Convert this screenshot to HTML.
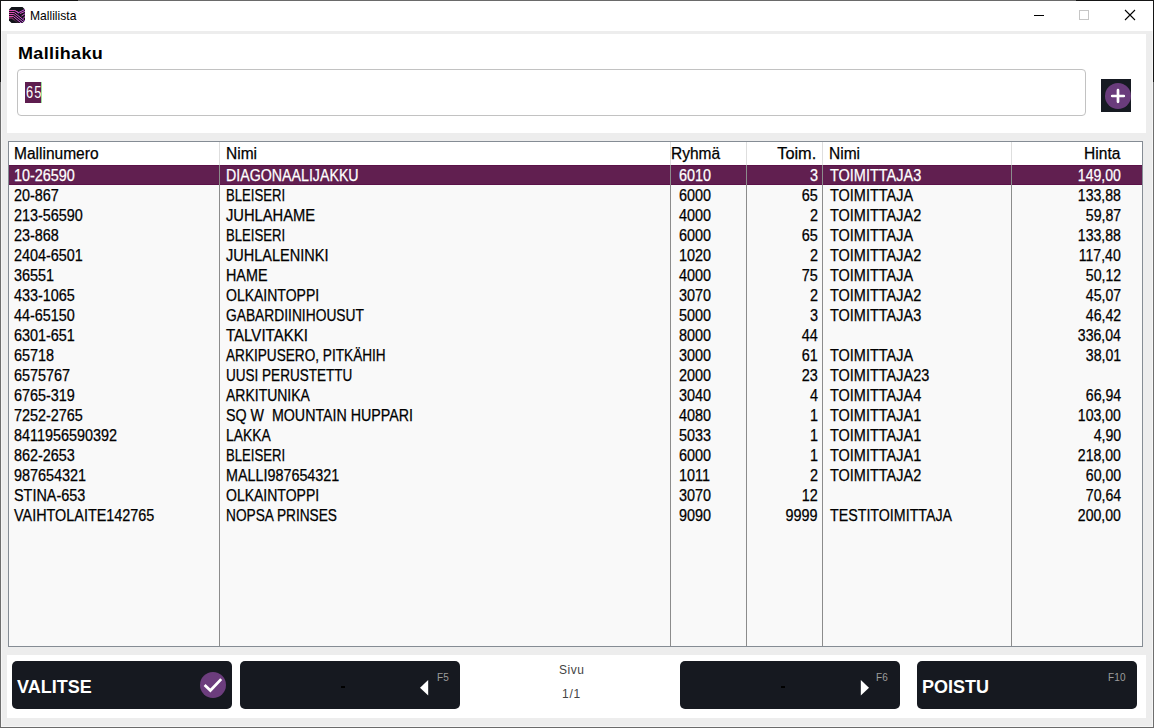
<!DOCTYPE html>
<html><head><meta charset="utf-8">
<style>
*{box-sizing:border-box;margin:0;padding:0}
html,body{width:1154px;height:728px;overflow:hidden;background:#fff}
body{position:relative;font-family:"Liberation Sans",sans-serif;color:#000}
.a{position:absolute}
.bL{left:0;top:0;width:1px;height:728px;background:#6e6e6e}
.bLt{left:0;top:0;width:1px;height:82px;background:#141414}
.bT{left:0;top:0;width:1154px;height:1px;background:#6a6a6a}
.bR{left:1153px;top:0;width:1px;height:728px;background:#6e6e6e}
.bB{left:0;top:727px;width:1154px;height:1px;background:#6a6a6a}
.gray{left:2px;top:31px;width:1150px;height:695px;background:#ededed}
.panel{background:#fff}
.title{left:30px;top:8px;font-size:13px;line-height:16px;color:#000;transform:scaleX(0.93);transform-origin:0 0}
.h1{left:18px;top:42px;font-size:18px;line-height:22px;font-weight:bold;letter-spacing:0.35px;transform:scaleY(0.96);transform-origin:0 100%}
.inp{left:17px;top:69px;width:1069px;height:47px;border:1px solid #c2c2c2;border-radius:4px;background:#fff}
.sel{left:25px;top:82px;width:16px;height:21px;background:#5e1d4f}
.seltxt{left:26px;top:82px;font-size:16px;line-height:21px;color:#fff;letter-spacing:1.3px;transform:scaleX(0.8);transform-origin:0 0}
.caret{left:41px;top:82px;width:1px;height:21px;background:#9ee09e}
.plus{left:1101px;top:79px;width:30px;height:33px;background:#161a22}
.tbl{left:8px;top:141px;width:1135px;height:506px;border:1px solid #858c94;background:#f9f9f9}
.hdr{left:9px;top:142px;width:1133px;height:23px;background:#fff}
.vs{width:1px;background:#8c8c8c}
.vsh{width:1px;background:#dedede}
.selrow{left:9px;top:165px;width:1133px;height:20px;background:#611f50;border-top:1px solid #5a1248;border-bottom:1px solid #5a1248}
.t{position:absolute;font-size:16px;line-height:20px;white-space:pre;transform:scaleX(0.9);transform-origin:0 0;-webkit-text-stroke:0.25px currentColor}
.r{transform-origin:100% 0;text-align:right}
.h{transform:scaleX(0.97)}
.w{color:#fff}
.btn{top:661px;width:220px;height:48px;background:#161920;border-radius:5px}
.bt{font-weight:bold;font-size:18px;line-height:20px;color:#fff}
.fk{font-size:10px;line-height:12px;color:#9c9c9c;letter-spacing:0.2px}
.pg{font-size:12px;line-height:14px;color:#444}
</style></head><body>
<div class="a gray"></div>
<div class="a panel" style="left:7px;top:34px;width:1139px;height:99px"></div>
<div class="a panel" style="left:7px;top:655px;width:1139px;height:63px"></div>
<div class="a" style="left:1px;top:1px;width:1152px;height:30px;background:#fff"></div>
<div class="a bT"></div><div class="a" style="left:0;top:0;width:78px;height:1px;background:#151515"></div><div class="a" style="left:1076px;top:0;width:78px;height:1px;background:#151515"></div>
<div class="a bL"></div><div class="a bLt"></div><div class="a bR"></div><div class="a" style="left:1153px;top:0;width:1px;height:82px;background:#151515"></div><div class="a bB"></div>
<div class="a" style="left:1px;top:31px;width:1px;height:696px;background:#f6f6f6"></div><div class="a" style="left:1152px;top:31px;width:1px;height:696px;background:#f6f6f6"></div><div class="a" style="left:1px;top:726px;width:1152px;height:1px;background:#f6f6f6"></div>

<!-- title bar -->
<svg class="a" style="left:9px;top:7px" width="16" height="16" viewBox="0 0 16 16">
<defs><clipPath id="ic"><path d="M2.5 0 H13.5 L16 2.5 V13.5 L13.5 16 H2.5 L0 13.5 V2.5 Z"/></clipPath>
<linearGradient id="ig" x1="0" y1="0" x2="1" y2="0.3"><stop offset="0" stop-color="#e04aa8"/><stop offset="1" stop-color="#cf5ae8"/></linearGradient>
<linearGradient id="ig2" x1="0" y1="0" x2="1" y2="0"><stop offset="0" stop-color="#e04aa8"/><stop offset="0.6" stop-color="#e04aa8" stop-opacity="0.2"/></linearGradient></defs>
<g clip-path="url(#ic)">
<rect width="16" height="16" fill="#111319"/>
<g stroke="url(#ig)" stroke-width="1" fill="none">
<path d="M0 3.5 H5.8 L9.6 5.6 L16 2.4"/>
<path d="M0 5.5 H5.3 L16 14.2"/>
<path d="M0 7.5 H4.8 L16 16.6"/>
<path d="M0 9.5 H4.3 L14 17.5"/>
<path d="M6.5 3.8 L10 6.2"/>
<path d="M11 6.5 L16 4.4"/>
<path d="M12.5 9 L16 6.8"/>
<path d="M14 11.5 L16 9.6"/>

</g>
<path d="M0 11 H3 L11 17.5" stroke="url(#ig2)" stroke-width="1.2" fill="none"/>
</g>
</svg>
<div class="a title">Mallilista</div>
<div class="a" style="left:1034px;top:15px;width:10px;height:1px;background:#000"></div>
<div class="a" style="left:1079px;top:10px;width:10px;height:10px;border:1px solid #c6c6c6"></div>
<svg class="a" style="left:1124px;top:9px" width="12" height="12" viewBox="0 0 12 12"><path d="M1 1 L11 11 M11 1 L1 11" stroke="#000" stroke-width="1.1"/></svg>

<!-- search -->
<div class="a h1">Mallihaku</div>
<div class="a inp"></div>
<div class="a sel"></div>
<div class="a seltxt">65</div>
<div class="a caret"></div>
<div class="a plus"></div>
<svg class="a" style="left:1101px;top:79px" width="30" height="33" viewBox="0 0 30 33">
<circle cx="17" cy="17" r="13" fill="#6a3c7c"/>
<path d="M11.2 17 H22.8 M17 11.2 V22.8" stroke="#fff" stroke-width="2.7" stroke-linecap="round"/>
</svg>

<!-- table -->
<div class="a tbl"></div>
<div class="a hdr"></div>
<div class="a selrow"></div>
<!--TABLE-->
<div class="a vsh" style="left:219px;top:142px;height:23px"></div>
<div class="a vs" style="left:219px;top:165px;height:481px"></div>
<div class="a vsh" style="left:670px;top:142px;height:23px"></div>
<div class="a vs" style="left:670px;top:165px;height:481px"></div>
<div class="a vsh" style="left:746px;top:142px;height:23px"></div>
<div class="a vs" style="left:746px;top:165px;height:481px"></div>
<div class="a vsh" style="left:822px;top:142px;height:23px"></div>
<div class="a vs" style="left:822px;top:165px;height:481px"></div>
<div class="a vsh" style="left:1011px;top:142px;height:23px"></div>
<div class="a vs" style="left:1011px;top:165px;height:481px"></div>
<div class="t h" style="left:14px;top:144px">Mallinumero</div>
<div class="t h" style="left:226px;top:144px">Nimi</div>
<div class="t h" style="left:671px;top:144px">Ryhmä</div>
<div class="t r h" style="right:338px;top:144px;transform:scaleX(1.0200)">Toim.</div>
<div class="t h" style="left:829px;top:144px">Nimi</div>
<div class="t r h" style="right:34px;top:144px">Hinta</div>
<div class="t w" style="left:14px;top:166px">10-26590</div>
<div class="t w" style="left:226px;top:166px;transform:scaleX(0.8878)">DIAGONAALIJAKKU</div>
<div class="t w" style="left:679px;top:166px">6010</div>
<div class="t r w" style="right:336px;top:166px">3</div>
<div class="t w" style="left:830px;top:166px;transform:scaleX(0.9050)">TOIMITTAJA3</div>
<div class="t r w" style="right:33px;top:166px;transform:scaleX(0.8800)">149,00</div>
<div class="t " style="left:14px;top:186px">20-867</div>
<div class="t " style="left:226px;top:186px;transform:scaleX(0.8214)">BLEISERI</div>
<div class="t " style="left:679px;top:186px">6000</div>
<div class="t r " style="right:336px;top:186px">65</div>
<div class="t " style="left:830px;top:186px;transform:scaleX(0.9050)">TOIMITTAJA</div>
<div class="t r " style="right:33px;top:186px;transform:scaleX(0.8800)">133,88</div>
<div class="t " style="left:14px;top:206px">213-56590</div>
<div class="t " style="left:226px;top:206px;transform:scaleX(0.9199)">JUHLAHAME</div>
<div class="t " style="left:679px;top:206px">4000</div>
<div class="t r " style="right:336px;top:206px">2</div>
<div class="t " style="left:830px;top:206px;transform:scaleX(0.9050)">TOIMITTAJA2</div>
<div class="t r " style="right:33px;top:206px;transform:scaleX(0.8800)">59,87</div>
<div class="t " style="left:14px;top:226px">23-868</div>
<div class="t " style="left:226px;top:226px;transform:scaleX(0.8214)">BLEISERI</div>
<div class="t " style="left:679px;top:226px">6000</div>
<div class="t r " style="right:336px;top:226px">65</div>
<div class="t " style="left:830px;top:226px;transform:scaleX(0.9050)">TOIMITTAJA</div>
<div class="t r " style="right:33px;top:226px;transform:scaleX(0.8800)">133,88</div>
<div class="t " style="left:14px;top:246px">2404-6501</div>
<div class="t " style="left:226px;top:246px;transform:scaleX(0.9072)">JUHLALENINKI</div>
<div class="t " style="left:679px;top:246px">1020</div>
<div class="t r " style="right:336px;top:246px">2</div>
<div class="t " style="left:830px;top:246px;transform:scaleX(0.9050)">TOIMITTAJA2</div>
<div class="t r " style="right:33px;top:246px;transform:scaleX(0.8800)">117,40</div>
<div class="t " style="left:14px;top:266px">36551</div>
<div class="t " style="left:226px;top:266px;transform:scaleX(0.8978)">HAME</div>
<div class="t " style="left:679px;top:266px">4000</div>
<div class="t r " style="right:336px;top:266px">75</div>
<div class="t " style="left:830px;top:266px;transform:scaleX(0.9050)">TOIMITTAJA</div>
<div class="t r " style="right:33px;top:266px;transform:scaleX(0.8800)">50,12</div>
<div class="t " style="left:14px;top:286px">433-1065</div>
<div class="t " style="left:226px;top:286px;transform:scaleX(0.8751)">OLKAINTOPPI</div>
<div class="t " style="left:679px;top:286px">3070</div>
<div class="t r " style="right:336px;top:286px">2</div>
<div class="t " style="left:830px;top:286px;transform:scaleX(0.9050)">TOIMITTAJA2</div>
<div class="t r " style="right:33px;top:286px;transform:scaleX(0.8800)">45,07</div>
<div class="t " style="left:14px;top:306px">44-65150</div>
<div class="t " style="left:226px;top:306px;transform:scaleX(0.8619)">GABARDIINIHOUSUT</div>
<div class="t " style="left:679px;top:306px">5000</div>
<div class="t r " style="right:336px;top:306px">3</div>
<div class="t " style="left:830px;top:306px;transform:scaleX(0.9050)">TOIMITTAJA3</div>
<div class="t r " style="right:33px;top:306px;transform:scaleX(0.8800)">46,42</div>
<div class="t " style="left:14px;top:326px">6301-651</div>
<div class="t " style="left:226px;top:326px;transform:scaleX(0.9409)">TALVITAKKI</div>
<div class="t " style="left:679px;top:326px">8000</div>
<div class="t r " style="right:336px;top:326px">44</div>
<div class="t r " style="right:33px;top:326px;transform:scaleX(0.8800)">336,04</div>
<div class="t " style="left:14px;top:346px">65718</div>
<div class="t " style="left:226px;top:346px;transform:scaleX(0.8512)">ARKIPUSERO, PITKÄHIH</div>
<div class="t " style="left:679px;top:346px">3000</div>
<div class="t r " style="right:336px;top:346px">61</div>
<div class="t " style="left:830px;top:346px;transform:scaleX(0.9050)">TOIMITTAJA</div>
<div class="t r " style="right:33px;top:346px;transform:scaleX(0.8800)">38,01</div>
<div class="t " style="left:14px;top:366px">6575767</div>
<div class="t " style="left:226px;top:366px;transform:scaleX(0.8459)">UUSI PERUSTETTU</div>
<div class="t " style="left:679px;top:366px">2000</div>
<div class="t r " style="right:336px;top:366px">23</div>
<div class="t " style="left:830px;top:366px;transform:scaleX(0.9050)">TOIMITTAJA23</div>
<div class="t " style="left:14px;top:386px">6765-319</div>
<div class="t " style="left:226px;top:386px;transform:scaleX(0.8738)">ARKITUNIKA</div>
<div class="t " style="left:679px;top:386px">3040</div>
<div class="t r " style="right:336px;top:386px">4</div>
<div class="t " style="left:830px;top:386px;transform:scaleX(0.9050)">TOIMITTAJA4</div>
<div class="t r " style="right:33px;top:386px;transform:scaleX(0.8800)">66,94</div>
<div class="t " style="left:14px;top:406px">7252-2765</div>
<div class="t " style="left:226px;top:406px;transform:scaleX(0.8904)">SQ W  MOUNTAIN HUPPARI</div>
<div class="t " style="left:679px;top:406px">4080</div>
<div class="t r " style="right:336px;top:406px">1</div>
<div class="t " style="left:830px;top:406px;transform:scaleX(0.9050)">TOIMITTAJA1</div>
<div class="t r " style="right:33px;top:406px;transform:scaleX(0.8800)">103,00</div>
<div class="t " style="left:14px;top:426px">8411956590392</div>
<div class="t " style="left:226px;top:426px;transform:scaleX(0.8687)">LAKKA</div>
<div class="t " style="left:679px;top:426px">5033</div>
<div class="t r " style="right:336px;top:426px">1</div>
<div class="t " style="left:830px;top:426px;transform:scaleX(0.9050)">TOIMITTAJA1</div>
<div class="t r " style="right:33px;top:426px;transform:scaleX(0.8800)">4,90</div>
<div class="t " style="left:14px;top:446px">862-2653</div>
<div class="t " style="left:226px;top:446px;transform:scaleX(0.8214)">BLEISERI</div>
<div class="t " style="left:679px;top:446px">6000</div>
<div class="t r " style="right:336px;top:446px">1</div>
<div class="t " style="left:830px;top:446px;transform:scaleX(0.9050)">TOIMITTAJA1</div>
<div class="t r " style="right:33px;top:446px;transform:scaleX(0.8800)">218,00</div>
<div class="t " style="left:14px;top:466px">987654321</div>
<div class="t " style="left:226px;top:466px;transform:scaleX(0.8968)">MALLI987654321</div>
<div class="t " style="left:679px;top:466px">1011</div>
<div class="t r " style="right:336px;top:466px">2</div>
<div class="t " style="left:830px;top:466px;transform:scaleX(0.9050)">TOIMITTAJA2</div>
<div class="t r " style="right:33px;top:466px;transform:scaleX(0.8800)">60,00</div>
<div class="t " style="left:14px;top:486px">STINA-653</div>
<div class="t " style="left:226px;top:486px;transform:scaleX(0.8751)">OLKAINTOPPI</div>
<div class="t " style="left:679px;top:486px">3070</div>
<div class="t r " style="right:336px;top:486px">12</div>
<div class="t r " style="right:33px;top:486px;transform:scaleX(0.8800)">70,64</div>
<div class="t " style="left:14px;top:506px">VAIHTOLAITE142765</div>
<div class="t " style="left:226px;top:506px;transform:scaleX(0.8550)">NOPSA PRINSES</div>
<div class="t " style="left:679px;top:506px">9090</div>
<div class="t r " style="right:336px;top:506px">9999</div>
<div class="t " style="left:830px;top:506px;transform:scaleX(0.8900)">TESTITOIMITTAJA</div>
<div class="t r " style="right:33px;top:506px;transform:scaleX(0.8800)">200,00</div>
<!--/TABLE-->

<!-- bottom buttons -->
<div class="a btn" style="left:12px"></div>
<div class="a bt" style="left:17px;top:677px">VALITSE</div>
<svg class="a" style="left:199px;top:671px" width="28" height="28" viewBox="0 0 28 28">
<circle cx="14" cy="14" r="13" fill="#6c3d7d"/>
<path d="M5.6 13.9 L11.4 19.4 L22.2 8.1" stroke="#fff" stroke-width="2.8" fill="none" stroke-linecap="butt" stroke-linejoin="miter"/>
</svg>
<div class="a btn" style="left:240px"></div>
<div class="a" style="left:341px;top:686px;width:4px;height:2px;background:#000"></div>
<svg class="a" style="left:419px;top:679px" width="11" height="18" viewBox="0 0 11 18"><path d="M1 8.7 L9.2 1 V16.5 Z" fill="#fff"/></svg>
<div class="a fk" style="left:437px;top:672px">F5</div>
<div class="a pg" style="left:559px;top:663px;letter-spacing:0.5px">Sivu</div>
<div class="a pg" style="left:562px;top:687px;letter-spacing:0.8px">1/1</div>
<div class="a btn" style="left:680px"></div>
<div class="a" style="left:781px;top:686px;width:4px;height:2px;background:#000"></div>
<svg class="a" style="left:859px;top:679px" width="11" height="18" viewBox="0 0 11 18"><path d="M10 8.7 L1.8 1 V16.5 Z" fill="#fff"/></svg>
<div class="a fk" style="left:876px;top:672px">F6</div>
<div class="a btn" style="left:917px"></div>
<div class="a bt" style="left:922px;top:677px">POISTU</div>
<div class="a fk" style="left:1108px;top:672px">F10</div>
</body></html>
